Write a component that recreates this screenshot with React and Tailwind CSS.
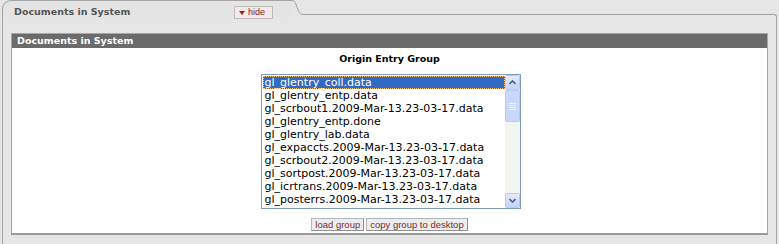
const files = [
  'gl_glentry_coll.data',
  'gl_glentry_entp.data',
  'gl_scrbout1.2009-Mar-13.23-03-17.data',
  'gl_glentry_entp.done',
  'gl_glentry_lab.data',
  'gl_expaccts.2009-Mar-13.23-03-17.data',
  'gl_scrbout2.2009-Mar-13.23-03-17.data',
  'gl_sortpost.2009-Mar-13.23-03-17.data',
  'gl_icrtrans.2009-Mar-13.23-03-17.data',
  'gl_posterrs.2009-Mar-13.23-03-17.data',
];

function ScrollArrow({ up }) {
  return (
    <div className="h-[15px] w-[15px] rounded-[2px] border border-[#b7cbf5] bg-gradient-to-b from-[#e3ecfd] to-[#c3d4fa] flex items-center justify-center">
      <svg width="7" height="5" viewBox="0 0 7 5">
        <path d={up ? 'M0.5 4 L3.5 1 L6.5 4' : 'M0.5 1 L3.5 4 L6.5 1'} fill="none" stroke="#4d6185" strokeWidth="1.6" />
      </svg>
    </div>
  );
}

function ListBox() {
  return (
    <div className="flex w-[260px] h-[135px] border border-[#7f9db9] bg-white">
      <div className="flex-1 pt-[1px] pl-[1px] text-[11px] leading-[13px] text-black font-['DejaVu_Sans',sans-serif] overflow-hidden">
        {files.map((f, i) => (
          <div
            key={f}
            className={`pl-[2px] h-[13px] whitespace-nowrap ${
              i === 0 ? 'bg-[#316ac5] text-white outline-dotted outline-1 outline-[#f5c07a] -outline-offset-1' : ''
            }`}
          >
            {f}
          </div>
        ))}
      </div>
      <div className="w-[15px] flex flex-col bg-[#f4f4f0]">
        <ScrollArrow up />
        <div className="flex-1">
          <div className="h-[32px] rounded-[2px] border border-[#b7cbf5] bg-[#c8d7fb] flex flex-col items-center justify-center gap-[1px]">
            <div className="w-[7px] h-[1px] bg-[#eef3fe]" />
            <div className="w-[7px] h-[1px] bg-[#eef3fe]" />
            <div className="w-[7px] h-[1px] bg-[#eef3fe]" />
            <div className="w-[7px] h-[1px] bg-[#eef3fe]" />
          </div>
        </div>
        <ScrollArrow />
      </div>
    </div>
  );
}

export default function App() {
  return (
    <div className="w-[779px] h-[244px] bg-[#e6e6e6] overflow-hidden font-['DejaVu_Sans',Verdana,sans-serif]">
      <div className="flex h-[17px]">
        <div className="ml-[2px] w-[290px] border-l border-t border-[#a3a3a3] rounded-tl-[9px] bg-[#e4e4e4] flex items-start pt-[5px]">
          <span className="ml-[11px] w-[220px] text-[9.5px] font-bold text-[#555] leading-[12px]">Documents in System</span>
          <button className="h-[13px] w-[39px] pl-[4px] flex items-center gap-[3px] border border-[#bbb] bg-[#f6e9e9] text-[9px] leading-[11px] text-[#7c1f1f] font-['Liberation_Sans',sans-serif]">
            <svg width="6" height="4" viewBox="0 0 6 4"><path d="M0 0 H6 L3 4 Z" fill="#b3171a" /></svg>
            hide
          </button>
        </div>
        <svg width="16" height="17" viewBox="0 0 16 17" className="shrink-0">
          <path d="M0 0.5 C6 0.5 4 14.5 11 14.5 H16" fill="none" stroke="#a3a3a3" />
        </svg>
        <div className="flex-1 mt-[14px] mr-[2px] border-t border-r border-[#a3a3a3] rounded-tr-[9px]" />
      </div>
      <div className="mx-[2px] h-[227px] border-l border-r border-[#a3a3a3] px-[8px] pt-[16px]">
        <div className="border border-[#a6a6a6] border-b-2 border-b-[#9a9a9a] bg-white h-[202px]">
          <div className="h-[14px] bg-[#6b6b6b] text-white text-[9.5px] font-bold leading-[14px] pl-[5px]">
            Documents in System
          </div>
          <div className="flex flex-col items-center">
            <div className="mt-[5px] text-[9.5px] font-bold leading-[12px] text-black">Origin Entry Group</div>
            <div className="mt-[9px] ml-[2px]">
              <ListBox />
            </div>
            <div className="mt-[9px] flex gap-[2px] font-['Liberation_Sans',sans-serif] text-[9.5px] leading-[11px] text-[#7c2b2b]">
              <button className="h-[13px] px-[3px] border border-[#b5b5b5] border-b-[#8f8f8f] border-r-[#8f8f8f] bg-[#ededed]">load group</button>
              <button className="h-[13px] px-[3px] border border-[#b5b5b5] border-b-[#8f8f8f] border-r-[#8f8f8f] bg-[#ededed]">copy group to desktop</button>
            </div>
          </div>
        </div>
      </div>
    </div>
  );
}
